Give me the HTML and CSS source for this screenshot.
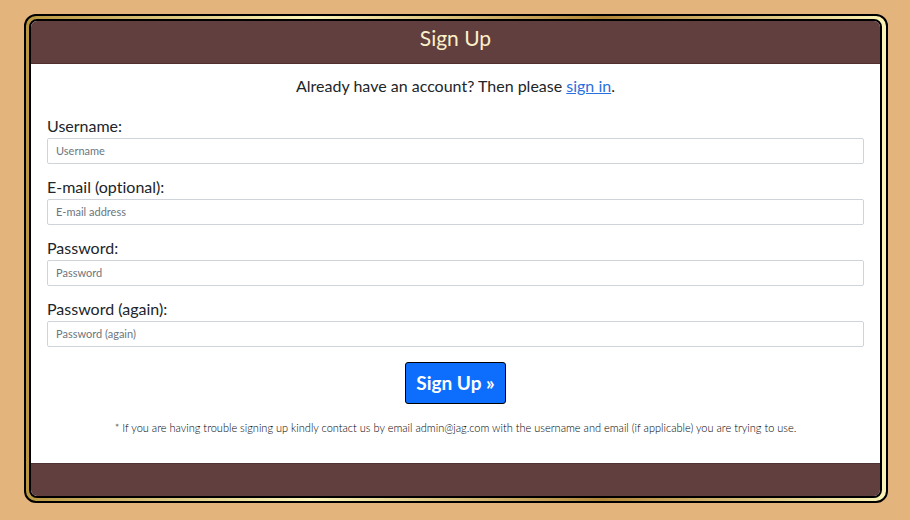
FILE: index.html
```html
<!DOCTYPE html>
<html lang="en">
<head>
<meta charset="utf-8">
<meta name="viewport" content="width=device-width, initial-scale=1">
<title>Sign Up</title>
<link rel="stylesheet" href="styles.css">
</head>
<body>
<main class="frame">
  <div class="card">
    <header class="card-header"><h1 class="title">Sign Up</h1></header>
    <form class="card-body">
      <p class="intro">Already have an account? Then please <a class="link" href="#signin">sign in</a>.</p>
      <div class="field">
        <label for="username">Username:</label>
        <input class="control" id="username" type="text" placeholder="Username">
      </div>
      <div class="field">
        <label for="email">E-mail (optional):</label>
        <input class="control" id="email" type="email" placeholder="E-mail address">
      </div>
      <div class="field">
        <label for="password">Password:</label>
        <input class="control" id="password" type="password" placeholder="Password">
      </div>
      <div class="field">
        <label for="password2">Password (again):</label>
        <input class="control" id="password2" type="password" placeholder="Password (again)">
      </div>
      <button class="submit" type="submit">Sign Up »</button>
      <p class="note">* If you are having trouble signing up kindly contact us by email admin@jag.com with the username and email (if applicable) you are trying to use.</p>
    </form>
    <footer class="card-footer"></footer>
  </div>
</main>
</body>
</html>
```
FILE: styles.css
```css
* {
  box-sizing: border-box;
}

body {
  margin: 0;
  padding: 14px 22px 17px 24px;
  background: #e3b47c;
  color: #212529;
  font: 16px/24px Lato, sans-serif;
  font-variant-ligatures: none;
}

.frame {
  padding: 3px 4px 3px 3px;
  border: 2px solid #000;
  border-radius: 12px;
  background: linear-gradient(to right, #b8963f, #fcf6ba 33%, #b38738 67%, #fbf5b7) border-box;
}

.card {
  overflow: hidden;
  border: 2px solid #000;
  border-radius: 8px;
  background: #fff;
}

.card-header {
  height: 43px;
  padding-top: 3px;
  border-bottom: 1px solid #512f2f;
  background: #613f3e;
}

.title {
  margin: 0;
  color: #fcf0c8;
  font-size: 21px;
  font-weight: 400;
  line-height: 28px;
  text-align: center;
}

.card-body {
  display: flex;
  flex-direction: column;
  padding: 10px 16px 26px;
}

.intro {
  margin: 0 0 16px;
  text-align: center;
}

.link {
  color: #2a6fe0;
}

.field {
  display: flex;
  flex-direction: column;
  margin-bottom: 11px;
}

.control {
  height: 26px;
  padding: 0 8px 2px;
  border: 1px solid #ced4da;
  border-radius: 2px;
  background: #fff;
  color: #212529;
  font: 11px/16px Lato, sans-serif;
}

.control::placeholder {
  color: #6c757d;
  opacity: 1;
}

.submit {
  align-self: center;
  height: 42px;
  margin-top: 4px;
  padding: 0 10px;
  border: 1px solid #000;
  border-radius: 3px;
  background: #0d6efd;
  color: #fff;
  font: 700 19px/28px Lato, sans-serif;
}

.note {
  margin: 15px 0 0;
  color: #000;
  font-size: 11px;
  font-weight: 300;
  line-height: 18px;
  text-align: center;
}

.card-footer {
  height: 33px;
  border-top: 1px solid #4c3334;
  background: #613f3e;
}
```
